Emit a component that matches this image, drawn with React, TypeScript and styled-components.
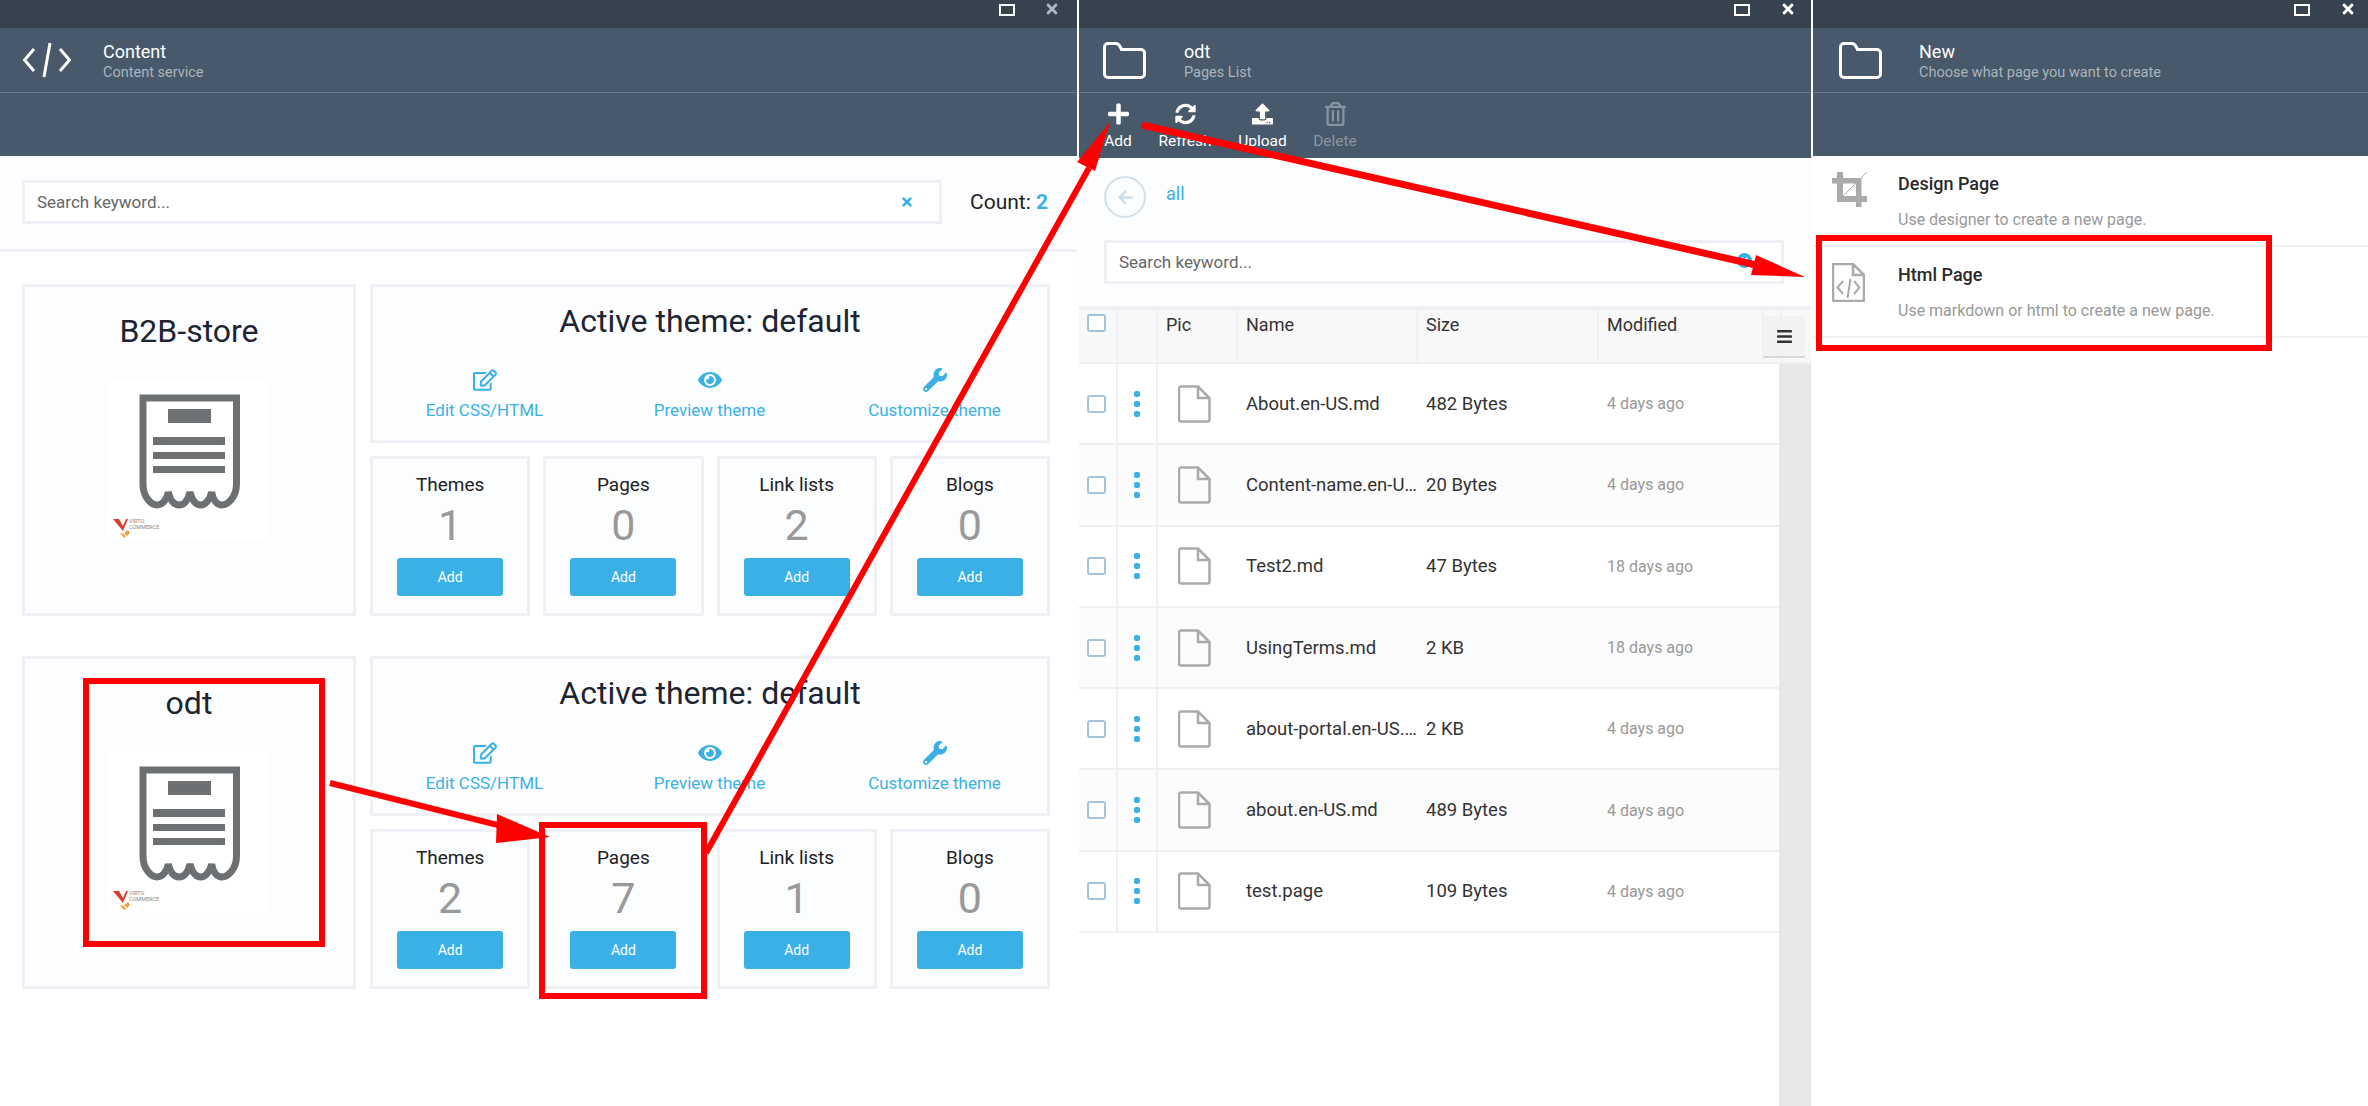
import { ReactNode } from "react";
import styled, { createGlobalStyle } from "styled-components";
import {
    FaArrowLeft,
    FaBars,
    FaEye,
    FaPlus,
    FaRegEdit,
    FaRegTrashAlt,
    FaSyncAlt,
    FaTimes,
    FaUpload,
    FaWrench,
} from "react-icons/fa";

const GlobalStyle = createGlobalStyle`
    html, body {
        margin: 0;
        padding: 0;
        background: #fff;
        font-family: Roboto, "Liberation Sans", sans-serif;
        color: #333;
    }
    * { box-sizing: border-box; }
`;

const Desktop = styled.div`
    position: relative;
    width: 2368px;
    height: 1106px;
    overflow: hidden;
    display: flex;
`;

const Blade = styled.section<{ $width: number; $edge?: boolean }>`
    width: ${(props) => props.$width}px;
    height: 100%;
    flex: none;
    display: flex;
    flex-direction: column;
    background: #fff;
    border-left: ${(props) => (props.$edge ? "2px solid #fff" : "none")};
`;

const TopBar = styled.div`
    height: 28px;
    flex: none;
    background: #36424f;
    position: relative;
`;

const MaxButton = styled.span<{ $right: number }>`
    position: absolute;
    top: 4px;
    right: ${(props) => props.$right}px;
    width: 16px;
    height: 12px;
    border: 2px solid #fff;
`;

const CloseButton = styled.span<{ $right: number; $muted?: boolean }>`
    position: absolute;
    top: 1px;
    right: ${(props) => props.$right}px;
    font-size: 16px;
    line-height: 16px;
    color: ${(props) => (props.$muted ? "#aeb6bf" : "#fff")};
`;

const BladeHead = styled.header`
    height: 65px;
    flex: none;
    background: #47596a;
    border-bottom: 1px solid #6a7b8b;
    display: flex;
    align-items: center;
`;

const HeadIcon = styled.div<{ $width: number; $left: number }>`
    width: ${(props) => props.$width}px;
    flex: none;
    padding-left: ${(props) => props.$left}px;
    display: flex;
`;

const HeadText = styled.div`
    display: flex;
    flex-direction: column;
    margin-top: 1px;
`;

const HeadTitle = styled.div`
    font-size: 18px;
    line-height: 24px;
    color: #fff;
`;

const HeadSub = styled.div`
    font-size: 14.5px;
    line-height: 18px;
    color: #aab4bd;
`;

const Toolbar = styled.div<{ $height: number }>`
    height: ${(props) => props.$height}px;
    flex: none;
    background: #47596a;
    display: flex;
    padding-left: 16px;
`;

const ToolButton = styled.div<{ $width: number; $disabled?: boolean }>`
    width: ${(props) => props.$width}px;
    display: flex;
    flex-direction: column;
    align-items: center;
    padding-top: 9px;
    color: ${(props) => (props.$disabled ? "#8795a2" : "#fff")};
    font-size: 15.5px;
    svg {
        width: 21px;
        height: 24px;
    }
    span {
        margin-top: 5px;
        line-height: 20px;
    }
`;

const SearchRow = styled.div`
    background: #fcfdff;
    padding: 24px 27px 25px 22px;
    border-bottom: 3px solid #eef0f6;
    display: flex;
    align-items: center;
`;

const SearchBox = styled.div<{ $width?: number; $inset: number }>`
    width: ${(props) => (props.$width ? `${props.$width}px` : "100%")};
    height: 44px;
    flex: none;
    background: #fff;
    border: 3px solid #eef0f6;
    display: flex;
    align-items: center;
    justify-content: space-between;
    padding: 0 ${(props) => props.$inset}px 0 12px;
    font-size: 17px;
    color: #666;
`;

const ClearIcon = styled.span`
    color: #3bb0e6;
    font-size: 14px;
    display: flex;
`;

const ClearBadge = styled.span`
    width: 15px;
    height: 15px;
    margin-top: -4px;
    border-radius: 50%;
    background: #3bb0e6;
    color: #fff;
    font-size: 9px;
    display: flex;
    align-items: center;
    justify-content: center;
`;

const Count = styled.div`
    margin-left: 28px;
    font-size: 21px;
    color: #222;
    b {
        color: #3bb0e6;
        font-weight: 700;
    }
`;

const StoreList = styled.div`
    padding: 32px 27px 0 22px;
    display: flex;
    flex-direction: column;
    gap: 40px;
`;

const StoreRow = styled.div<{ $height: number }>`
    height: ${(props) => props.$height}px;
    display: grid;
    grid-template-columns: 334px 680px;
    gap: 14px;
`;

const Card = styled.div`
    background: #fcfdff;
    border: 3px solid #eef0f6;
`;

const StoreCard = styled(Card)`
    display: flex;
    flex-direction: column;
    align-items: center;
    padding-top: 24px;
`;

const StoreName = styled.div`
    font-size: 32px;
    line-height: 40px;
    color: #1e2430;
    margin-bottom: 29px;
`;

const ThumbBox = styled.div`
    width: 160px;
    height: 160px;
    background: #fff;
`;

const StoreSide = styled.div`
    display: flex;
    flex-direction: column;
    gap: 13px;
`;

const ThemeCard = styled(Card)`
    flex: 1;
    display: flex;
    flex-direction: column;
    align-items: center;
    padding: 14px 0 19px;
`;

const ThemeTitle = styled.div`
    font-size: 32px;
    line-height: 40px;
    color: #1e2430;
`;

const ThemeActions = styled.div`
    width: 100%;
    margin-top: auto;
    display: grid;
    grid-template-columns: repeat(3, 225px);
    transform: translateX(-1px);
`;

const ThemeAction = styled.div`
    display: flex;
    flex-direction: column;
    align-items: center;
    gap: 7px;
    color: #3bb0e6;
    font-size: 17px;
    line-height: 22px;
    svg {
        width: 24px;
        height: 24px;
    }
`;

const StatGrid = styled.div`
    flex: none;
    height: 160px;
    display: grid;
    grid-template-columns: repeat(4, 1fr);
    gap: 13px;
`;

const StatCard = styled(Card)`
    display: flex;
    flex-direction: column;
    align-items: center;
    padding: 14px 0 17px;
`;

const StatLabel = styled.div`
    font-size: 19px;
    line-height: 24px;
    color: #222;
`;

const StatValue = styled.div`
    margin-top: 4px;
    font-size: 43px;
    line-height: 48px;
    color: #999;
`;

const AddButton = styled.div`
    margin-top: auto;
    width: 106px;
    height: 38px;
    border-radius: 3px;
    background: #3bb0e6;
    color: #fff;
    font-size: 14px;
    display: flex;
    align-items: center;
    justify-content: center;
`;

const PagesTop = styled.div`
    background: #fcfdff;
    padding: 18px 27px 22px 25px;
`;

const BackRow = styled.div`
    display: flex;
    margin-bottom: 22px;
`;

const BackCircle = styled.div`
    width: 42px;
    height: 42px;
    border-radius: 50%;
    border: 2px solid #cfe0ec;
    color: #cfe0ec;
    font-size: 17px;
    display: flex;
    align-items: center;
    justify-content: center;
`;

const BackLink = styled.div`
    margin-left: 20px;
    color: #3bb0e6;
    font-size: 18px;
    line-height: 36px;
`;

const TableHead = styled.div`
    position: relative;
    height: 58px;
    flex: none;
    background: #f8f8f8;
    border-top: 4px solid #eef0f6;
    border-bottom: 2px solid #eef0f6;
    display: grid;
    grid-template-columns: 39px 40px 80px 180px 181px 165px 18px;
`;

const HeadCell = styled.div`
    border-right: 2px solid #eef0f6;
    padding: 3px 0 0 8px;
    font-size: 18px;
    line-height: 24px;
    color: #333;
`;

const MenuButton = styled.div`
    position: absolute;
    top: 6px;
    right: 6px;
    width: 42px;
    height: 42px;
    background: #f2f2f2;
    border-bottom: 2px solid #d8d8d8;
    display: flex;
    align-items: center;
    justify-content: center;
    font-size: 17px;
    color: #333;
`;

const TableBody = styled.div`
    flex: 1;
    display: flex;
`;

const RowList = styled.div`
    width: 700px;
    flex: none;
`;

const ScrollStrip = styled.div`
    flex: 1;
    background: #e8e8e8;
`;

const Row = styled.div<{ $odd: boolean }>`
    height: 81.3px;
    display: grid;
    grid-template-columns: 39px 40px 80px 180px 181px 1fr;
    align-items: center;
    background: ${(props) => (props.$odd ? "#fff" : "#fcfcfc")};
    border-bottom: 2px solid #eef0f6;
`;

const BoxCell = styled.div`
    height: 100%;
    border-right: 2px solid #eef0f6;
    display: flex;
    align-items: center;
    padding-left: 8px;
`;

const CheckBox = styled.span`
    width: 19px;
    height: 18px;
    border: 2px solid #a3c4dc;
    border-radius: 3px;
    background: #fff;
`;

const HeadCheck = styled(CheckBox)`
    display: block;
    margin: 1px 0 0 0;
`;

const DotCell = styled(BoxCell)`
    justify-content: center;
    padding-left: 0;
`;

const Dots = styled.span`
    display: flex;
    flex-direction: column;
    gap: 4px;
    i {
        width: 6px;
        height: 6px;
        border-radius: 2px;
        background: #3bb0e6;
    }
`;

const PicCell = styled.div`
    padding-left: 20px;
    display: flex;
`;

const NameCell = styled.div`
    padding-left: 8px;
    font-size: 18.5px;
    color: #333;
    white-space: nowrap;
    overflow: hidden;
    text-overflow: ellipsis;
`;

const DateCell = styled.div`
    padding-left: 8px;
    font-size: 16px;
    color: #999;
`;

const ChoiceRow = styled.div`
    height: 91px;
    border-bottom: 2px solid #eef0f6;
    display: flex;
    padding: 16px 0 0 19px;
`;

const ChoiceIcon = styled.div`
    width: 66px;
    flex: none;
    svg {
        display: block;
    }
`;

const ChoiceTitle = styled.div`
    font-size: 18px;
    font-weight: 500;
    line-height: 24px;
    color: #2a2a2a;
`;

const ChoiceText = styled.div`
    margin-top: 12px;
    font-size: 16px;
    line-height: 24px;
    color: #999;
`;

const Overlay = styled.svg`
    position: absolute;
    left: 0;
    top: 0;
    pointer-events: none;
`;

const CodeIcon = () => (
    <svg width="48" height="36" viewBox="0 0 48 36" fill="none" stroke="#fff" strokeWidth="3">
        <path d="M11 7 1.500 18 11 29M37 7l9.500 11L37 29M27 1l-6 34" />
    </svg>
);

const FolderIcon = () => (
    <svg width="43" height="37" viewBox="0 0 43 37" fill="none" stroke="#fff" strokeWidth="3">
        <path d="M5 1.500h8c2 0 3 1 4 3l1.500 3H38c2 0 3.500 1.500 3.500 3.500v21c0 2-1.500 3.500-3.500 3.500H5c-2 0-3.500-1.500-3.500-3.500V5c0-2 1.500-3.500 3.500-3.500z" />
    </svg>
);

const FileIcon = () => (
    <svg width="33" height="38" viewBox="0 0 33 38" fill="none" stroke="#aaa" strokeWidth="2.500">
        <path d="M3 1.500h17L31.500 13v21.500a2 2 0 0 1-2 2H3a2 2 0 0 1-2-2v-31a2 2 0 0 1 2-2zM20 1.500V13h11.500" />
    </svg>
);

const HtmlFileIcon = () => (
    <svg width="33" height="39" viewBox="0 0 33 39" fill="none" stroke="#aaa" strokeWidth="2">
        <path d="M2 1h19l11 11v25a1 1 0 0 1-1 1H2a1 1 0 0 1-1-1V2a1 1 0 0 1 1-1zM21 1v11h11" strokeWidth="2.500" />
        <path d="M11 18l-5.500 6.500L11 31M22 18l5.500 6.500L22 31M18.500 16l-3 19" />
    </svg>
);

const CropIcon = () => (
    <svg width="36" height="36" viewBox="0 0 36 36" fill="#aaa">
        <path d="M5 0h6v30H5zM0 6h29.500v5.500H0zM24 6h5.500v29H24zM5 24h30v6H5z" />
        <path d="M5 30 35 0" stroke="#aaa" strokeWidth="1" />
    </svg>
);

// Receipt thumbnail with the small vendor mark under it
const ReceiptThumb = () => (
    <svg width="160" height="160" viewBox="0 0 160 160">
        <path
            d="M34 18H127.500V104C127.500 118 118 125 113 125C108 125 104 120 102.700 112C101 120 96 125 92 125C87 125 83 120 81 112C79 120 75 125 70 125C65 125 61 120 59.300 112C58 120 53 125 48 125C43 125 34 118 34 104Z"
            fill="none"
            stroke="#6d7072"
            strokeWidth="7"
        />
        <rect x="59" y="29" width="43" height="14" fill="#6d7072" />
        <rect x="44" y="57" width="72" height="8" fill="#6d7072" />
        <rect x="44" y="72" width="72" height="7" fill="#6d7072" />
        <rect x="44" y="86" width="72" height="7" fill="#6d7072" />
        <path d="M4 139h6l4 7 3-7h2l-5 12z" fill="#d9402a" />
        <path d="M15 153l4-3 2 3-3 3zM11 153l4 1 2 4-3-1z" fill="#f0a040" />
        <text x="20" y="143" fontSize="5.500" fill="#888" fontFamily="Roboto">VIRTO</text>
        <text x="20" y="149" fontSize="5.500" fill="#888" fontFamily="Roboto">COMMERCE</text>
    </svg>
);

const stores = [
    { name: "B2B-store", height: 332, stats: [1, 0, 2, 0] },
    { name: "odt", height: 333, stats: [2, 7, 1, 0] },
];

const statNames = ["Themes", "Pages", "Link lists", "Blogs"];

const pages = [
    { name: "About.en-US.md", size: "482 Bytes", date: "4 days ago" },
    { name: "Content-name.en-US.md", size: "20 Bytes", date: "4 days ago" },
    { name: "Test2.md", size: "47 Bytes", date: "18 days ago" },
    { name: "UsingTerms.md", size: "2 KB", date: "18 days ago" },
    { name: "about-portal.en-US.md", size: "2 KB", date: "4 days ago" },
    { name: "about.en-US.md", size: "489 Bytes", date: "4 days ago" },
    { name: "test.page", size: "109 Bytes", date: "4 days ago" },
];

function Head({ icon, iconWidth, iconLeft, title, sub }: { icon: ReactNode; iconWidth: number; iconLeft: number; title: string; sub: string }) {
    return (
        <BladeHead>
            <HeadIcon $width={iconWidth} $left={iconLeft}>{icon}</HeadIcon>
            <HeadText>
                <HeadTitle>{title}</HeadTitle>
                <HeadSub>{sub}</HeadSub>
            </HeadText>
        </BladeHead>
    );
}

function App() {
    return (
        <Desktop>
            <GlobalStyle />
            <Blade $width={1077}>
                <TopBar>
                    <MaxButton $right={62} />
                    <CloseButton $right={17} $muted><FaTimes /></CloseButton>
                </TopBar>
                <Head icon={<CodeIcon />} iconWidth={103} iconLeft={23} title="Content" sub="Content service" />
                <Toolbar $height={63} />
                <SearchRow>
                    <SearchBox $width={920} $inset={25}>
                        Search keyword...
                        <ClearIcon><FaTimes /></ClearIcon>
                    </SearchBox>
                    <Count>Count: <b>2</b></Count>
                </SearchRow>
                <StoreList>
                    {stores.map((store) => (
                        <StoreRow key={store.name} $height={store.height}>
                            <StoreCard>
                                <StoreName>{store.name}</StoreName>
                                <ThumbBox><ReceiptThumb /></ThumbBox>
                            </StoreCard>
                            <StoreSide>
                                <ThemeCard>
                                    <ThemeTitle>Active theme: default</ThemeTitle>
                                    <ThemeActions>
                                        <ThemeAction><FaRegEdit />Edit CSS/HTML</ThemeAction>
                                        <ThemeAction><FaEye />Preview theme</ThemeAction>
                                        <ThemeAction><FaWrench />Customize theme</ThemeAction>
                                    </ThemeActions>
                                </ThemeCard>
                                <StatGrid>
                                    {statNames.map((label, i) => (
                                        <StatCard key={label}>
                                            <StatLabel>{label}</StatLabel>
                                            <StatValue>{store.stats[i]}</StatValue>
                                            <AddButton>Add</AddButton>
                                        </StatCard>
                                    ))}
                                </StatGrid>
                            </StoreSide>
                        </StoreRow>
                    ))}
                </StoreList>
            </Blade>

            <Blade $width={734} $edge>
                <TopBar>
                    <MaxButton $right={61} />
                    <CloseButton $right={15}><FaTimes /></CloseButton>
                </TopBar>
                <Head icon={<FolderIcon />} iconWidth={105} iconLeft={24} title="odt" sub="Pages List" />
                <Toolbar $height={65}>
                    <ToolButton $width={46}><FaPlus /><span>Add</span></ToolButton>
                    <ToolButton $width={88}><FaSyncAlt /><span>Refresh</span></ToolButton>
                    <ToolButton $width={67}><FaUpload /><span>Upload</span></ToolButton>
                    <ToolButton $width={78} $disabled><FaRegTrashAlt /><span>Delete</span></ToolButton>
                </Toolbar>
                <PagesTop>
                    <BackRow>
                        <BackCircle><FaArrowLeft /></BackCircle>
                        <BackLink>all</BackLink>
                    </BackRow>
                    <SearchBox $inset={29}>
                        Search keyword...
                        <ClearBadge><FaTimes /></ClearBadge>
                    </SearchBox>
                </PagesTop>
                <TableHead>
                    <HeadCell><HeadCheck /></HeadCell>
                    <HeadCell />
                    <HeadCell>Pic</HeadCell>
                    <HeadCell>Name</HeadCell>
                    <HeadCell>Size</HeadCell>
                    <HeadCell>Modified</HeadCell>
                    <HeadCell />
                    <MenuButton><FaBars /></MenuButton>
                </TableHead>
                <TableBody>
                    <RowList>
                        {pages.map((page, i) => (
                            <Row key={page.name} $odd={i % 2 === 0}>
                                <BoxCell><CheckBox /></BoxCell>
                                <DotCell><Dots><i /><i /><i /></Dots></DotCell>
                                <PicCell><FileIcon /></PicCell>
                                <NameCell>{page.name}</NameCell>
                                <NameCell>{page.size}</NameCell>
                                <DateCell>{page.date}</DateCell>
                            </Row>
                        ))}
                    </RowList>
                    <ScrollStrip />
                </TableBody>
            </Blade>

            <Blade $width={557} $edge>
                <TopBar>
                    <MaxButton $right={58} />
                    <CloseButton $right={12}><FaTimes /></CloseButton>
                </TopBar>
                <Head icon={<FolderIcon />} iconWidth={106} iconLeft={26} title="New" sub="Choose what page you want to create" />
                <Toolbar $height={63} />
                <ChoiceRow>
                    <ChoiceIcon><CropIcon /></ChoiceIcon>
                    <div>
                        <ChoiceTitle>Design Page</ChoiceTitle>
                        <ChoiceText>Use designer to create a new page.</ChoiceText>
                    </div>
                </ChoiceRow>
                <ChoiceRow>
                    <ChoiceIcon><HtmlFileIcon /></ChoiceIcon>
                    <div>
                        <ChoiceTitle>Html Page</ChoiceTitle>
                        <ChoiceText>Use markdown or html to create a new page.</ChoiceText>
                    </div>
                </ChoiceRow>
            </Blade>

            {/* hand-drawn annotations on top of the screenshot */}
            <Overlay width="2368" height="1106" viewBox="0 0 2368 1106" fill="none">
                <g stroke="#fe0000" strokeWidth="6">
                    <rect x="86" y="681" width="236" height="263" />
                    <rect x="542" y="825" width="162" height="171" />
                    <rect x="1819" y="238" width="450" height="110" />
                    <path d="M330 783 510 828" />
                    <path d="M706 853 1089 168" />
                    <path d="M1142 125 1765 267" strokeWidth="7" />
                </g>
                <g fill="#fe0000">
                    <path d="M550 837 497 814 496 843z" />
                    <path d="M1110 122 1095 171 1077 162z" />
                    <path d="M1805 277 1751 275 1756 255z" />
                </g>
            </Overlay>
        </Desktop>
    );
}

export default App;
